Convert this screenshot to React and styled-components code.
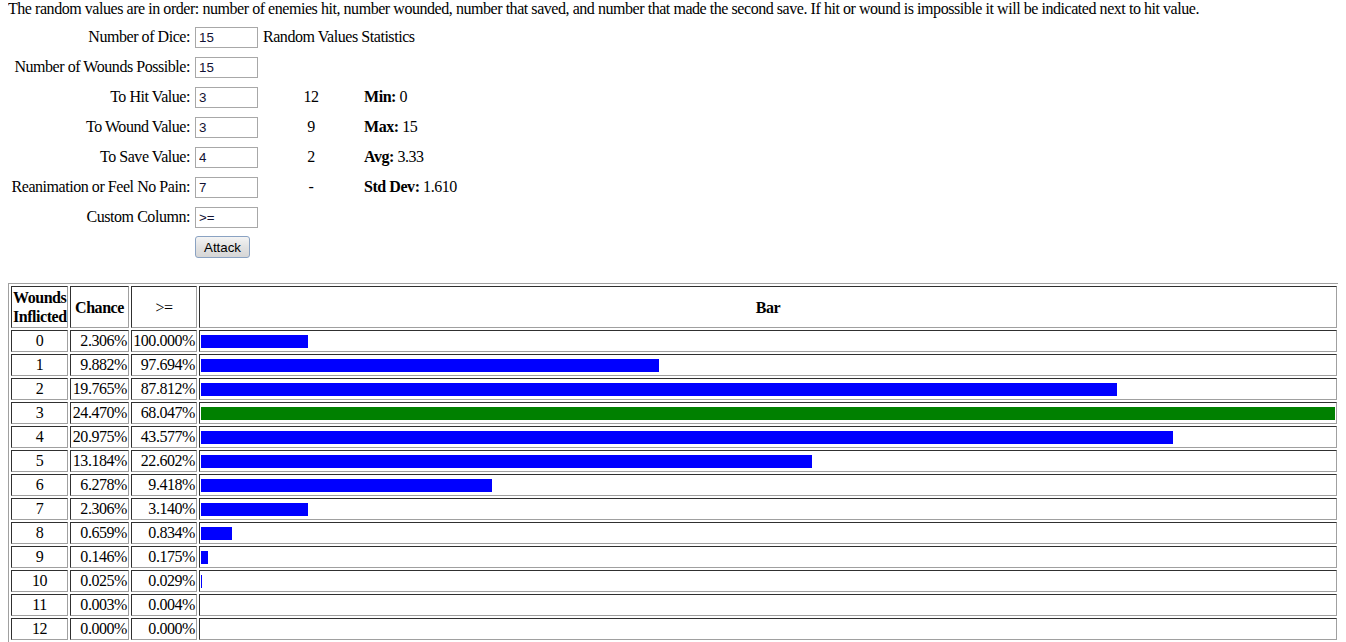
import React from 'react';
import styled, { createGlobalStyle } from 'styled-components';

const GlobalStyle = createGlobalStyle`
    body {
        margin: 0 8px 8px;
        background: #fff;
        color: #000;
        font-family: "Liberation Serif", "Times New Roman", serif;
        font-size: 16px;
        letter-spacing: -0.45px;
    }
`;

const Intro = styled.p`
    margin: 0;
`;

const Form = styled.form`
    margin-top: 5px;
    padding-left: 3px;
`;

const FormRow = styled.div`
    display: grid;
    grid-template-columns: 179px 63px 96px auto;
    column-gap: 5px;
    align-items: center;
    height: 28px;
    margin-bottom: 2px;
`;

const Label = styled.label`
    text-align: right;
    white-space: nowrap;
`;

const Input = styled.input`
    box-sizing: border-box;
    width: 63px;
    height: 21px;
    margin: 0;
    padding: 1px 2px 0 3px;
    border: 1px solid #a8a8a8;
    font-family: "Liberation Sans", Arial, sans-serif;
    font-size: 13.33px;
    letter-spacing: 0;
    color: #111133;
    background: #fff;
`;

const Heading = styled.span`
    grid-column: 3 / span 2;
    white-space: nowrap;
`;

const Count = styled.span`
    text-align: center;
`;

const Stat = styled.span`
    white-space: nowrap;
`;

const AttackButton = styled.button`
    grid-column: 2;
    justify-self: start;
    height: 22px;
    padding: 0 8px;
    border: 1px solid #8aa2c2;
    border-radius: 3px;
    background: linear-gradient(#f4f4f4, #e2e2e2 50%, #d6d6d6);
    font-family: "Liberation Sans", Arial, sans-serif;
    font-size: 13.33px;
    letter-spacing: 0;
    color: #000;
`;

const ResultTable = styled.table`
    width: 1332px;
    margin-top: 22px;
    border: 1px solid;
    border-color: #a0a0a0 #303030 #303030 #a0a0a0;
    border-collapse: separate;
    border-spacing: 2px;
    table-layout: fixed;
`;

const Cell = styled.td`
    border: 1px solid;
    border-color: #303030 #a0a0a0 #a0a0a0 #303030;
    padding: 1px;
    text-align: ${p => p.$align || 'center'};
    vertical-align: middle;
    white-space: nowrap;
`;

const HeadCell = styled.th`
    width: ${p => (p.$width ? `${p.$width}px` : 'auto')};
    height: 38px;
    border: 1px solid;
    border-color: #303030 #a0a0a0 #a0a0a0 #303030;
    padding: 1px;
    line-height: 19px;
    text-align: center;
    vertical-align: middle;
    font-weight: ${p => (p.$plain ? 'normal' : 'bold')};
`;

const Bar = styled.div`
    height: 13px;
    background: ${p => (p.$best ? '#008000' : '#0000ff')};
`;

const inputs = [
    { label: 'Number of Dice:', value: '15', heading: 'Random Values Statistics' },
    { label: 'Number of Wounds Possible:', value: '15' },
    { label: 'To Hit Value:', value: '3', count: '12', stat: ['Min:', '0'] },
    { label: 'To Wound Value:', value: '3', count: '9', stat: ['Max:', '15'] },
    { label: 'To Save Value:', value: '4', count: '2', stat: ['Avg:', '3.33'] },
    { label: 'Reanimation or Feel No Pain:', value: '7', count: '-', stat: ['Std Dev:', '1.610'] },
    { label: 'Custom Column:', value: '>=' },
];

const rows = [
    [0, 2.306, 100.0],
    [1, 9.882, 97.694],
    [2, 19.765, 87.812],
    [3, 24.47, 68.047],
    [4, 20.975, 43.577],
    [5, 13.184, 22.602],
    [6, 6.278, 9.418],
    [7, 2.306, 3.14],
    [8, 0.659, 0.834],
    [9, 0.146, 0.175],
    [10, 0.025, 0.029],
    [11, 0.003, 0.004],
    [12, 0.0, 0.0],
];

const maxChance = Math.max(...rows.map(r => r[1]));

const barWidth = chance => {
    const pct = (chance / maxChance) * 100;
    return pct < 0.05 ? 0 : pct;
};

export default function App() {
    return (
        <>
            <GlobalStyle />
            <Intro>
                The random values are in order: number of enemies hit, number wounded, number that saved, and number that made the second save. If hit or wound is impossible it will be indicated next to hit value.
            </Intro>
            <Form onSubmit={e => e.preventDefault()}>
                {inputs.map(({ label, value, heading, count, stat }) => (
                    <FormRow key={label}>
                        <Label>{label}</Label>
                        <Input defaultValue={value} />
                        {heading && <Heading>{heading}</Heading>}
                        {count && <Count>{count}</Count>}
                        {stat && (
                            <Stat>
                                <b>{stat[0]}</b> {stat[1]}
                            </Stat>
                        )}
                    </FormRow>
                ))}
                <FormRow>
                    <AttackButton type="submit">Attack</AttackButton>
                </FormRow>
            </Form>
            <ResultTable>
                <tbody>
                    <tr>
                        <HeadCell $width={53}>Wounds Inflicted</HeadCell>
                        <HeadCell $width={55}>Chance</HeadCell>
                        <HeadCell $width={62} $plain>&gt;=</HeadCell>
                        <HeadCell>Bar</HeadCell>
                    </tr>
                    {rows.map(([wounds, chance, atLeast]) => (
                        <tr key={wounds}>
                            <Cell>{wounds}</Cell>
                            <Cell $align="right">{chance.toFixed(3)}%</Cell>
                            <Cell $align="right">{atLeast.toFixed(3)}%</Cell>
                            <Cell $align="left">
                                <Bar
                                    $best={chance === maxChance}
                                    style={{ width: `${barWidth(chance)}%` }}
                                />
                            </Cell>
                        </tr>
                    ))}
                </tbody>
            </ResultTable>
        </>
    );
}
